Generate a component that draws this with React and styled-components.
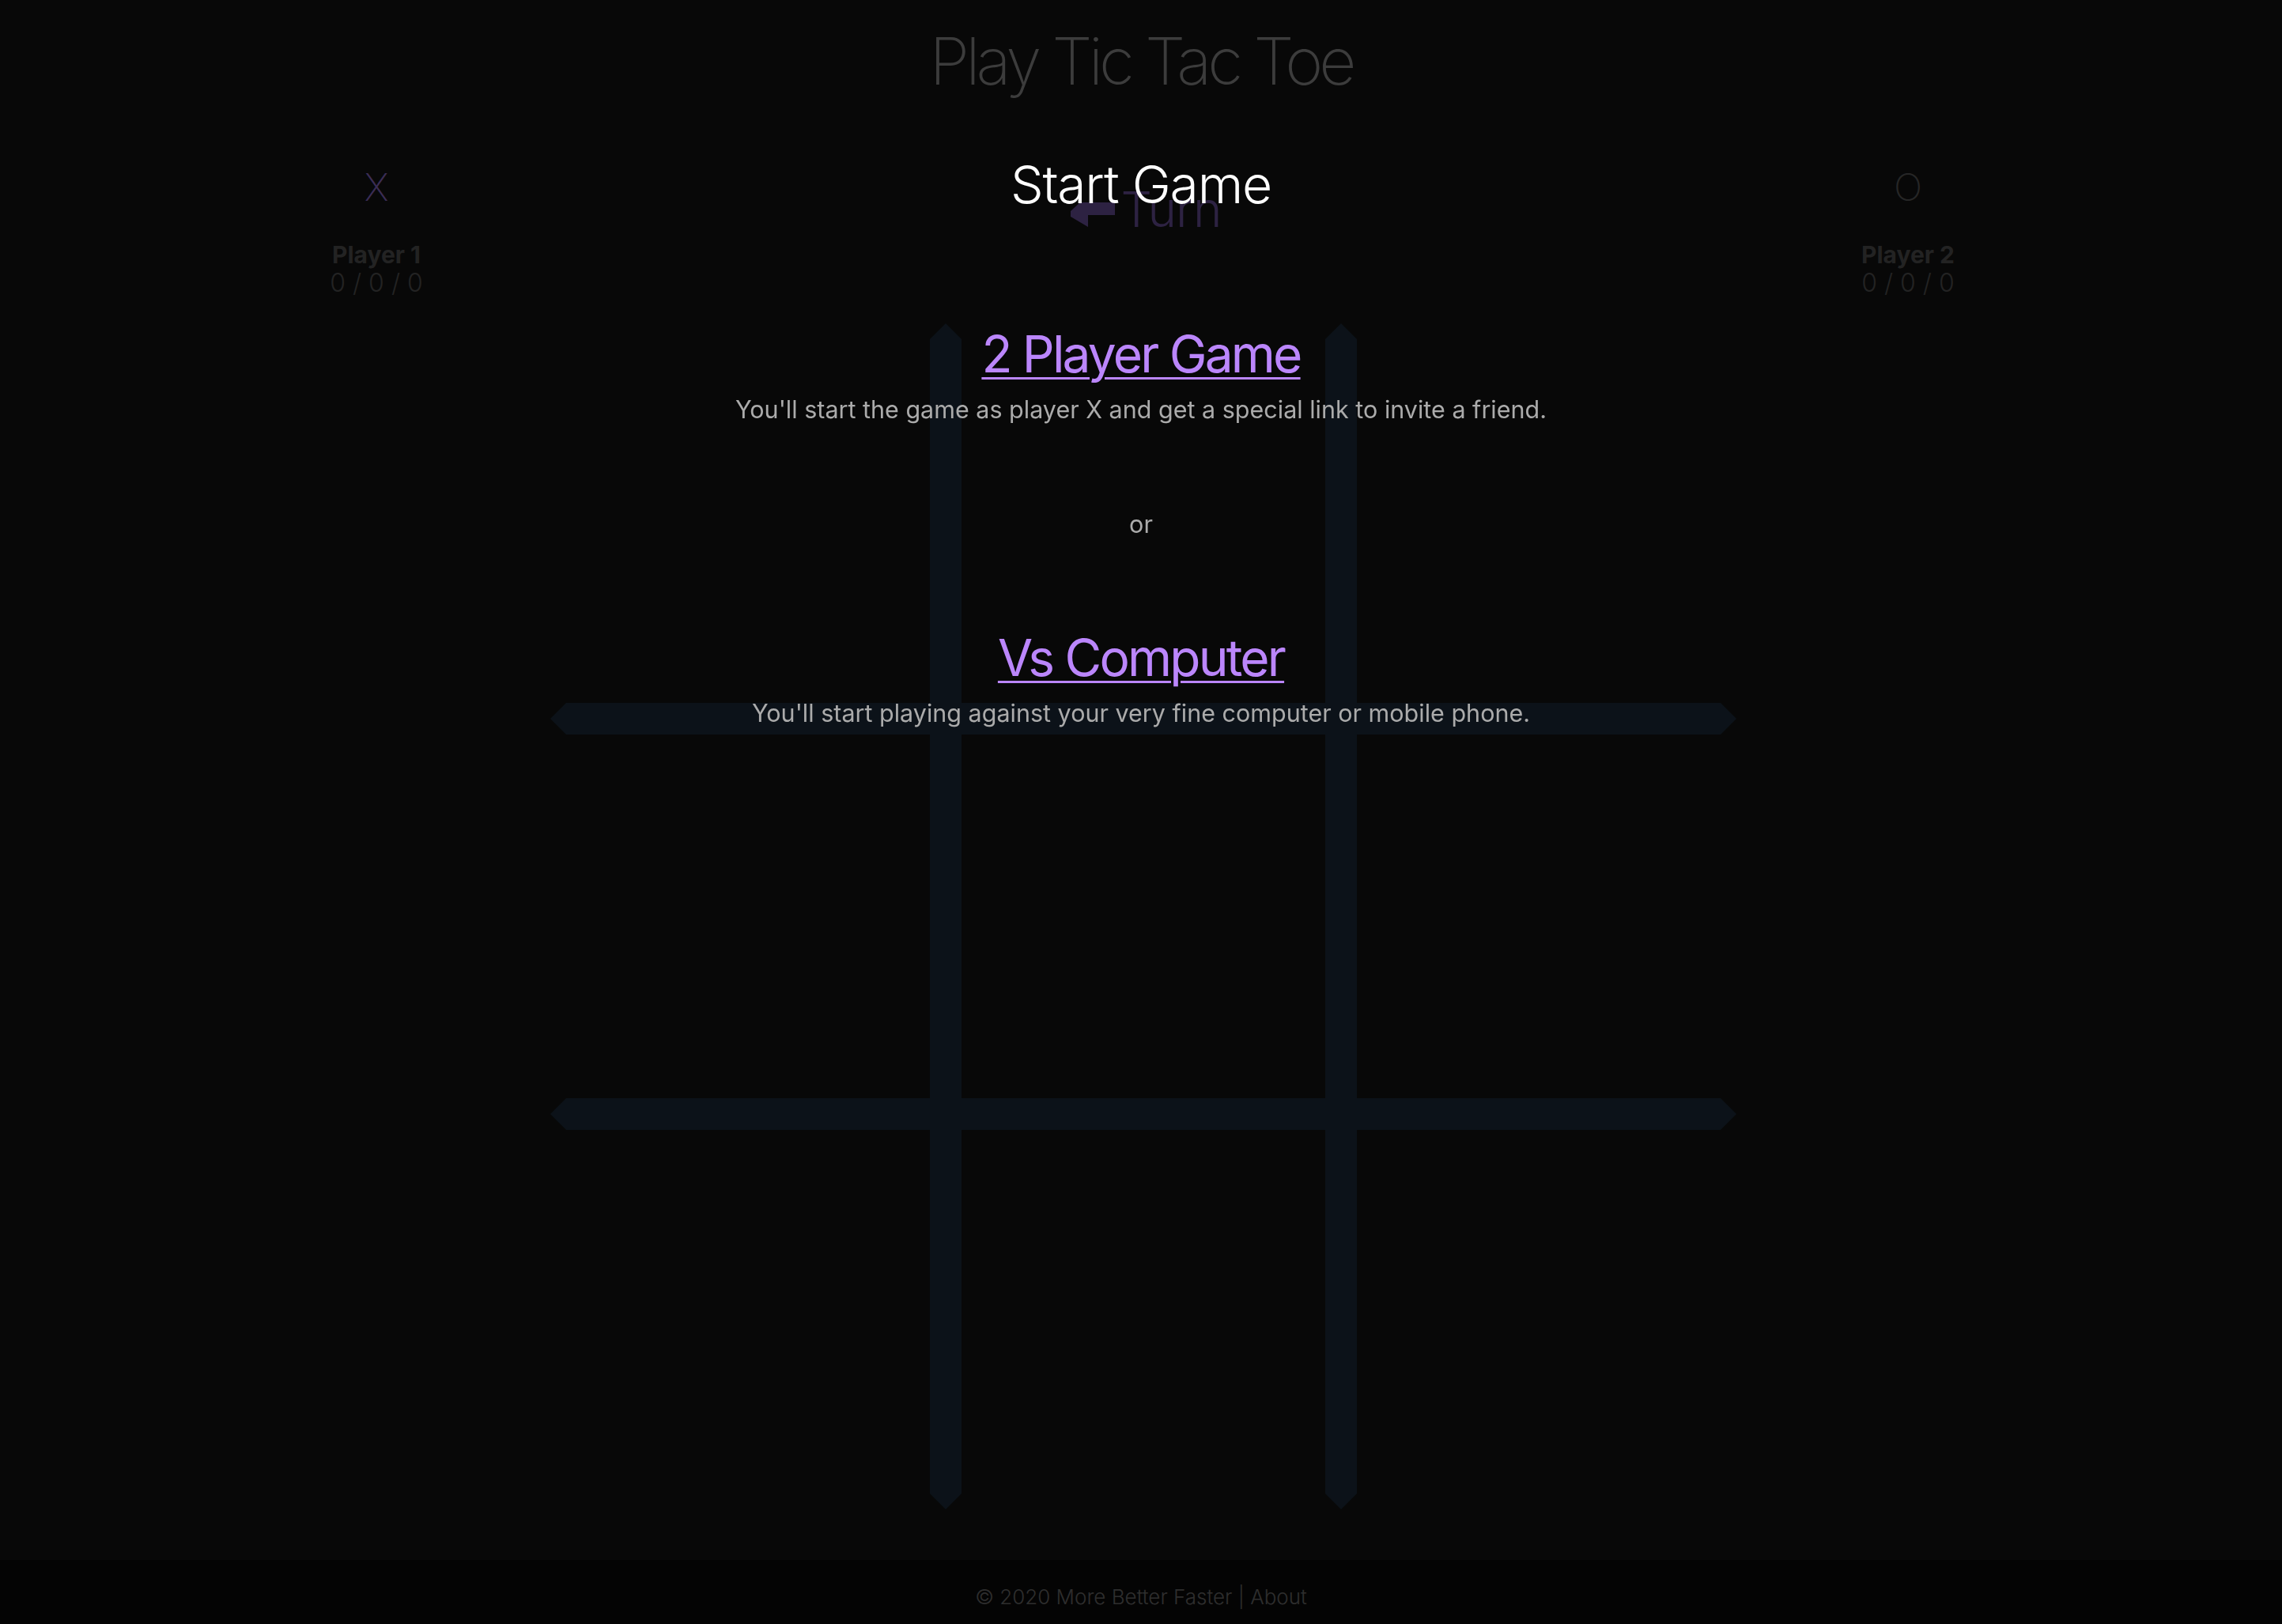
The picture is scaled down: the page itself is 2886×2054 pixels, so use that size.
import React from 'react';
import styled, { createGlobalStyle } from 'styled-components';

// --- Global ---
const GlobalStyle = createGlobalStyle`
  html, body {
    margin: 0;
    padding: 0;
    background-color: #121212;
    font-family: Inter, "Noto Sans", "Liberation Sans", sans-serif;
    color: #e0e0e0;
  }
  * { box-sizing: border-box; }
`;

// --- Styled Components ---
const Page = styled.div`
  min-height: 100vh;
  display: flex;
  flex-direction: column;
`;

const Main = styled.main`
  flex: 1;
  display: flex;
  flex-direction: column;
  align-items: center;
`;

const Title = styled.h1`
  margin: 0;
  padding-top: 37px;
  font-size: 82px;
  line-height: 1;
  font-weight: 200;
  letter-spacing: -5px;
  color: #858585;
`;

const Scoreboard = styled.div`
  width: 100%;
  margin-top: 94px;
  padding: 0 393px 0 396px;
  display: flex;
  justify-content: space-between;
  align-items: flex-start;
`;

const PlayerCard = styled.div`
  width: 160px;
  display: flex;
  flex-direction: column;
  align-items: center;
`;

const Mark = styled.div`
  font-size: 48px;
  line-height: 1;
  font-weight: 200;
  color: ${({ $x }) => ($x ? '#8364bd' : '#555555')};
`;

const PlayerName = styled.div`
  margin-top: 45px;
  font-size: 30px;
  line-height: 33px;
  font-weight: 700;
  color: #4e4e4e;
`;

const Score = styled.div`
  font-size: 32px;
  line-height: 1.2;
  font-weight: 300;
  color: #4e4e4e;
`;

const TurnIndicator = styled.div`
  margin: 21px 0 0 9px;
  display: flex;
  align-items: center;
  gap: 8px;
  color: #644c93;
`;

const TurnText = styled.span`
  font-size: 62px;
  line-height: 1;
  font-weight: 300;
  letter-spacing: -1px;
`;

const Arrow = styled.svg`
  margin-top: 13px;
  display: block;
`;

const Board = styled.div`
  position: relative;
  margin-top: 32px;
  margin-left: 6px;
  width: 1500px;
  height: 1500px;
  display: grid;
  grid-template-columns: repeat(3, 1fr);
  grid-template-rows: repeat(3, 1fr);
`;

const GridLines = styled.svg`
  position: absolute;
  inset: 0;
  pointer-events: none;
`;

const Cell = styled.button`
  position: relative;
  background: transparent;
  border: none;
  cursor: pointer;
`;

const Footer = styled.footer`
  height: 81px;
  padding-top: 12px;
  background-color: #0b0b0b;
  display: flex;
  align-items: center;
  justify-content: center;
  font-size: 26px;
  font-weight: 300;
  color: #666666;
`;

const FooterLink = styled.a`
  color: inherit;
  text-decoration: none;
`;

const Overlay = styled.div`
  position: fixed;
  inset: 0;
  background-color: rgba(0, 0, 0, 0.55);
  display: flex;
  flex-direction: column;
  align-items: center;
  text-align: center;
  padding-top: 200px;
`;

const ModalTitle = styled.h2`
  margin: 0;
  font-size: 66px;
  line-height: 1;
  font-weight: 300;
  letter-spacing: -1.2px;
  color: #ffffff;
`;

const Option = styled.a`
  margin-top: ${({ $gap }) => $gap}px;
  font-size: 64px;
  line-height: 1;
  font-weight: 400;
  letter-spacing: -2.8px;
  color: #bb86fc;
  text-decoration: underline;
  text-decoration-thickness: 3px;
  text-underline-offset: 6px;
  cursor: pointer;
`;

const OptionNote = styled.p`
  margin: 20px 0 0;
  font-size: 30.5px;
  line-height: 1.2;
  font-weight: 400;
  letter-spacing: 0;
  color: #ababab;
`;

const Divider = styled.p`
  margin: 108px 0 0;
  font-size: 30.5px;
  line-height: 1.2;
  color: #ababab;
`;

// --- Components ---
const bar = (horizontal, at) => {
  const t = 20;
  if (horizontal) {
    return `0,${at} ${t},${at - t} ${1500 - t},${at - t} 1500,${at} ${1500 - t},${at + t} ${t},${at + t}`;
  }
  return `${at},0 ${at + t},${t} ${at + t},${1500 - t} ${at},1500 ${at - t},${1500 - t} ${at - t},${t}`;
};

const Player = ({ mark, name }) => (
  <PlayerCard>
    <Mark $x={mark === 'X'}>{mark}</Mark>
    <PlayerName>{name}</PlayerName>
    <Score>0 / 0 / 0</Score>
  </PlayerCard>
);

export default function App() {
  return (
    <>
      <GlobalStyle />
      <Page>
        <Main>
          <Title>Play Tic Tac Toe</Title>
          <Scoreboard>
            <Player mark="X" name="Player 1" />
            <TurnIndicator>
              <Arrow width="56" height="31" viewBox="0 0 56 31">
                <polygon points="12,0 56,0 56,16 22,16 22,31 0,18 0,11" fill="currentColor" />
              </Arrow>
              <TurnText>Turn</TurnText>
            </TurnIndicator>
            <Player mark="O" name="Player 2" />
          </Scoreboard>
          <Board>
            <GridLines width="1500" height="1500" viewBox="0 0 1500 1500">
              {[500, 1000].map((at) => (
                <React.Fragment key={at}>
                  <polygon points={bar(false, at)} fill="#1b2838" />
                  <polygon points={bar(true, at)} fill="#1b2838" />
                </React.Fragment>
              ))}
            </GridLines>
            {Array.from({ length: 9 }, (_, i) => <Cell key={i} aria-label={`cell ${i + 1}`} />)}
          </Board>
        </Main>
        <Footer>
          © 2020 More Better Faster |&nbsp;<FooterLink href="#about">About</FooterLink>
        </Footer>
      </Page>
      <Overlay>
        <ModalTitle>Start Game</ModalTitle>
        <Option $gap={150}>2 Player Game</Option>
        <OptionNote>You'll start the game as player X and get a special link to invite a friend.</OptionNote>
        <Divider>or</Divider>
        <Option $gap={119}>Vs Computer</Option>
        <OptionNote>You'll start playing against your very fine computer or mobile phone.</OptionNote>
      </Overlay>
    </>
  );
}
